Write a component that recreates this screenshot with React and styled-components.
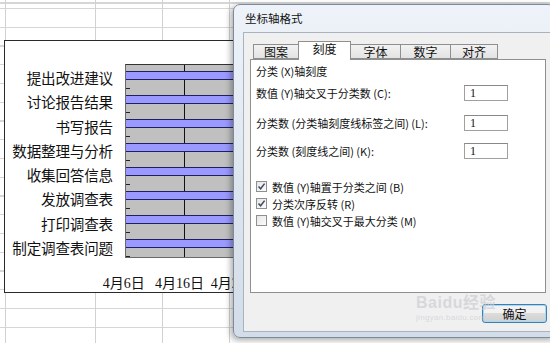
import styled, { createGlobalStyle } from "styled-components";

const GlobalStyle = createGlobalStyle`
  html, body {
    margin: 0;
    padding: 0;
    background: #fff;
  }
  body {
    font-family: "Noto Sans CJK SC", "Liberation Sans", sans-serif;
  }
`;

const Sheet = styled.div`
  position: relative;
  width: 550px;
  height: 343px;
  overflow: hidden;
  background-color: #fff;
  background-image:
    linear-gradient(to right, transparent 5px, #d2d2d2 5px 6px, transparent 6px 95px, #d2d2d2 95px 96px, transparent 96px 162px, #d2d2d2 162px 163px, transparent 163px 229px, #d2d2d2 229px 230px, transparent 230px),
    repeating-linear-gradient(to bottom, #d6d6d6 0 1px, transparent 1px 18.75px);
  background-position: 0 0, 0 8px;
`;

/* chart object sitting on the sheet */
const Chart = styled.div`
  position: absolute;
  left: 4px;
  top: 40px;
  width: 260px;
  height: 253px;
  background: #fff;
  border: 1px solid #2a2a2a;
  box-sizing: border-box;
  display: flex;
  flex-direction: column;
  padding-top: 23px;
`;

const ChartBody = styled.div`
  display: flex;
  gap: 12px;
  height: 195px;
`;

const Labels = styled.div`
  width: 108px;
  display: grid;
  grid-template-rows: repeat(8, minmax(0, 1fr));
  font-size: 14.6px;
  color: #111;
  text-align: right;
  white-space: nowrap;
`;

const Label = styled.div`
  line-height: 21px;
  padding-top: 3px;
  letter-spacing: -0.2px;
`;

const Plot = styled.div`
  flex: 1;
  display: grid;
  grid-template-rows: repeat(8, minmax(0, 1fr));
  background-color: #c0c0c0;
  background-image: linear-gradient(to right, transparent 58px, #111 58px 59px, transparent 59px);
  border-top: 1px solid #333;
  border-left: 1px solid #6a6a6a;
  border-bottom: 1px solid #6a6a6a;
`;

const Category = styled.div`
  position: relative;
  padding-top: 6px;
  box-sizing: border-box;
`;

const Tick = styled.span`
  position: absolute;
  left: 0;
  bottom: 0;
  width: 4px;
  height: 1px;
  background: #222;
`;

const Bar = styled.div`
  height: 7px;
  background: #9999ff;
  border-top: 1px solid #202060;
  border-bottom: 1px solid #202060;
`;

const Axis = styled.div`
  display: flex;
  padding-left: 91px;
  margin-top: 14px;
  font-family: "Liberation Serif", "Noto Sans CJK SC", serif;
  font-size: 14px;
  color: #111;
`;

const AxisLabel = styled.div`
  width: 59px;
  text-align: center;
  white-space: nowrap;
`;

/* dialog window */
const Dialog = styled.div`
  position: absolute;
  left: 233px;
  top: 4px;
  width: 322px;
  height: 334px;
  box-sizing: border-box;
  border: 1px solid #7c8a99;
  border-radius: 7px 7px 0 7px;
  background: linear-gradient(to bottom, #eef3f9, #dbe4ee 60%, #d3dde9);
  box-shadow: -2px 2px 6px rgba(0, 0, 0, 0.35);
  display: flex;
  flex-direction: column;
  padding: 0 0 5px 9px;
`;

const Title = styled.div`
  height: 27px;
  line-height: 27px;
  padding-left: 2px;
  font-size: 11.5px;
  color: #111;
`;

const Client = styled.div`
  flex: 1;
  background: #f0f0f0;
  border: 1px solid #a9b3c0;
  display: flex;
  flex-direction: column;
  padding: 7px 0 0 6px;
  position: relative;
`;

const Tabs = styled.div`
  display: flex;
  align-items: flex-end;
  height: 19px;
  padding-left: 4px;
`;

const Tab = styled.div`
  width: ${(p) => p.w}px;
  height: ${(p) => (p.active ? 19 : 15)}px;
  box-sizing: border-box;
  border: 1px solid #8e8f8f;
  border-bottom: ${(p) => (p.active ? "none" : "1px solid #8e8f8f")};
  margin-left: -1px;
  background: ${(p) => (p.active ? "#fff" : "linear-gradient(#f2f2f2, #e3e3e3)")};
  font-size: 12px;
  line-height: 14px;
  text-align: center;
  color: #111;
  position: relative;
  z-index: ${(p) => (p.active ? 2 : 1)};
  margin-bottom: ${(p) => (p.active ? "-1px" : "0")};
`;

const Panel = styled.div`
  width: 296px;
  height: 234px;
  box-sizing: border-box;
  background: #fff;
  border: 1px solid #8e8f8f;
  padding: 3px 0 0 5px;
  font-size: 11px;
  color: #111;
`;

const Heading = styled.div`
  height: 17px;
  line-height: 17px;
`;

const FieldRow = styled.div`
  display: flex;
  align-items: center;
  height: 16px;
  margin-top: ${(p) => p.mt}px;
`;

const FieldLabel = styled.div`
  width: 208px;
  white-space: nowrap;
`;

const NumBox = styled.div`
  width: 44px;
  height: 16px;
  box-sizing: border-box;
  border: 1px solid #a0a0a0;
  border-top-color: #888;
  padding-left: 5px;
  line-height: 14px;
  font-family: "Liberation Serif", serif;
  font-size: 12px;
`;

const Checks = styled.div`
  margin-top: 21px;
  display: flex;
  flex-direction: column;
  gap: 4px;
`;

const CheckRow = styled.div`
  display: flex;
  align-items: center;
  gap: 5px;
  height: 13px;
  white-space: nowrap;
`;

const Box = styled.span`
  width: 11px;
  height: 11px;
  box-sizing: border-box;
  border: 1px solid #8f8f8f;
  background: linear-gradient(135deg, #e6e6e6, #fbfbfb);
  display: flex;
  align-items: center;
  justify-content: center;
`;

const Footer = styled.div`
  flex: 1;
  display: flex;
  justify-content: flex-end;
  align-items: flex-start;
  padding: 11px 6px 0 0;
`;

const OkButton = styled.div`
  width: 65px;
  height: 19px;
  box-sizing: border-box;
  border: 1px solid #3c7fb1;
  border-radius: 3px;
  box-shadow: inset 0 0 0 1px #a8d8f3;
  background: linear-gradient(#f2f2f2 45%, #dcdcdc 50%, #d0d0d0);
  font-size: 12px;
  line-height: 17px;
  text-align: center;
  color: #111;
`;

const Watermark = styled.div`
  position: absolute;
  left: 416px;
  top: 295px;
  color: rgba(205, 205, 210, 0.7);
  font-family: "Liberation Sans", "Noto Sans CJK SC", sans-serif;
  pointer-events: none;
  line-height: 1;
`;

const Mark = styled.div`
  font-size: 16px;
  font-weight: 700;
  letter-spacing: 0.5px;
`;

const MarkUrl = styled.div`
  font-size: 8px;
  margin-top: 3px;
  letter-spacing: 0.3px;
`;

const tasks = [
  "提出改进建议",
  "讨论报告结果",
  "书写报告",
  "数据整理与分析",
  "收集回答信息",
  "发放调查表",
  "打印调查表",
  "制定调查表问题",
];

const tabs = [
  { name: "图案", w: 46 },
  { name: "刻度", w: 53, active: true },
  { name: "字体", w: 51 },
  { name: "数字", w: 51 },
  { name: "对齐", w: 48 },
];

const Check = ({ on }) => (
  <Box>
    {on && (
      <svg width="9" height="9" viewBox="0 0 9 9">
        <path d="M1.5 4.5 L3.6 6.8 L7.6 1.6" fill="none" stroke="#3a4a66" strokeWidth="1.5" />
      </svg>
    )}
  </Box>
);

export default function App() {
  return (
    <Sheet>
      <GlobalStyle />
      <Chart>
        <ChartBody>
          <Labels>
            {tasks.map((t) => (
              <Label key={t}>{t}</Label>
            ))}
          </Labels>
          <Plot>
            {tasks.map((t) => (
              <Category key={t}>
                <Bar />
                <Tick />
              </Category>
            ))}
          </Plot>
        </ChartBody>
        <Axis>
          <AxisLabel>4月6日</AxisLabel>
          <AxisLabel>4月16日</AxisLabel>
          <AxisLabel>4月26日</AxisLabel>
        </Axis>
      </Chart>

      <Dialog>
        <Title>坐标轴格式</Title>
        <Client>
          <Tabs>
            {tabs.map((t) => (
              <Tab key={t.name} w={t.w} active={t.active}>
                {t.name}
              </Tab>
            ))}
          </Tabs>
          <Panel>
            <Heading>分类 (X)轴刻度</Heading>
            <FieldRow mt={5}>
              <FieldLabel>数值 (Y)轴交叉于分类数 (C):</FieldLabel>
              <NumBox>1</NumBox>
            </FieldRow>
            <FieldRow mt={14}>
              <FieldLabel>分类数 (分类轴刻度线标签之间) (L):</FieldLabel>
              <NumBox>1</NumBox>
            </FieldRow>
            <FieldRow mt={12}>
              <FieldLabel>分类数 (刻度线之间) (K):</FieldLabel>
              <NumBox>1</NumBox>
            </FieldRow>
            <Checks>
              <CheckRow>
                <Check on />
                数值 (Y)轴置于分类之间 (B)
              </CheckRow>
              <CheckRow>
                <Check on />
                分类次序反转 (R)
              </CheckRow>
              <CheckRow>
                <Check />
                数值 (Y)轴交叉于最大分类 (M)
              </CheckRow>
            </Checks>
          </Panel>
          <Footer>
            <OkButton>确定</OkButton>
          </Footer>
        </Client>
      </Dialog>

      <Watermark>
        <Mark>Baidu经验</Mark>
        <MarkUrl>jingyan.baidu.com</MarkUrl>
      </Watermark>
    </Sheet>
  );
}
